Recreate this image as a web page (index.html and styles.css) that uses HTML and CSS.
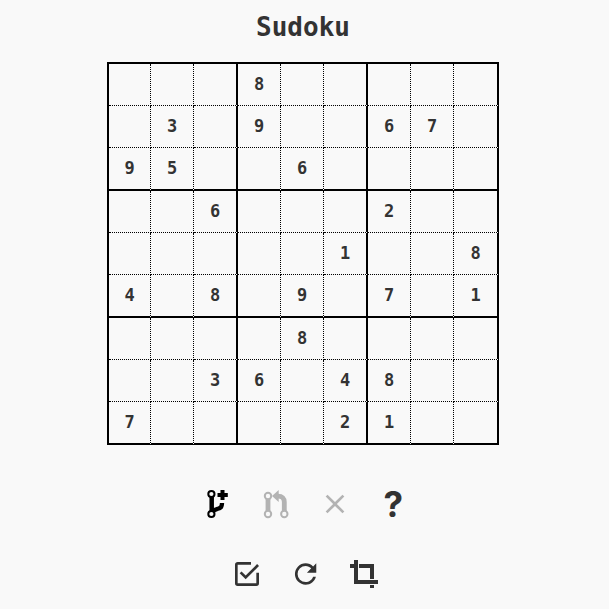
FILE: index.html
```html
<!DOCTYPE html>
<html lang="en">
<head>
<meta charset="utf-8">
<title>Sudoku</title>
<link rel="stylesheet" href="styles.css">
</head>
<body>
<h1 class="title">Sudoku</h1>
<main class="board" id="board"></main>
<div class="toolbar">
  <button class="tool" aria-label="Branch"><svg viewBox="0 0 32 32"><g fill="none" stroke="#000"><path d="M9.700 8v16" stroke-width="4.500"/><path d="M9.700 24Q12.500 21.500 15.500 20.800Q20 20.500 20 15" stroke-width="4.300"/><path d="M20.500 2v10M15.500 7h10.300" stroke-width="4"/><g fill="#f9f9f9" stroke-width="2"><circle cx="9.400" cy="6" r="3.100"/><circle cx="9.400" cy="26" r="3.100"/></g></g></svg></button>
  <button class="tool off" aria-label="Merge"><svg viewBox="0 0 32 32"><g fill="none" stroke="#b3b3b3"><path d="M8 10v14M24.300 24V14Q24.300 8.200 18 8.200H16" stroke-width="4.800"/><path d="M12 8L18.700 2v12z" fill="#b3b3b3" stroke="none"/><g fill="#f9f9f9" stroke-width="2"><circle cx="8" cy="8" r="3.200"/><circle cx="8" cy="26" r="3.200"/><circle cx="24.300" cy="26" r="3.200"/></g></g></svg></button>
  <button class="tool off" aria-label="Discard"><svg viewBox="0 0 24 24"><path d="M19 6.410L17.590 5 12 10.590 6.410 5 5 6.410 10.590 12 5 17.590 6.410 19 12 13.410 17.590 19 19 17.590 13.410 12z"/></svg></button>
  <button class="tool help">?</button>
</div>
<div class="toolbar second">
  <button class="tool" aria-label="Check"><svg viewBox="0 0 24 24"><path d="M19 19H5V5H15V3H5C3.890 3 3 3.890 3 5V19A2 2 0 0 0 5 21H19A2 2 0 0 0 21 19V11H19M7.910 10.080L6.500 11.500 11 16 21 6 19.590 4.580 11 13.170z"/></svg></button>
  <button class="tool" aria-label="Restart"><svg viewBox="0 0 24 24"><path d="M17.350 6.350C15.900 4.900 13.910 4 11.700 4A8 8 0 0 0 3.700 12A8 8 0 0 0 11.700 20C15.430 20 18.540 17.450 19.430 14H17.350C16.530 16.330 14.310 18 11.700 18A6 6 0 0 1 5.700 12A6 6 0 0 1 11.700 6C13.360 6 14.840 6.690 15.920 7.780L12.700 11H19.700V4z"/></svg></button>
  <button class="tool" aria-label="Crop"><svg viewBox="0 0 32 32"><path d="M6 2h4v20H30v4H6V10H2V6H6zM11 6h15v15h-4V10H11zM22 27h4v3h-4z"/></svg></button>
</div>
<script src="board.js"></script>
</body>
</html>
```
FILE: styles.css
```css
body {
  margin: 0;
  background: #f9f9f9;
  color: #333;
  font-family: "DejaVu Sans Mono", monospace;
  display: flex;
  flex-direction: column;
  align-items: center;
}
.title {
  margin: 12px 3px 20px 0;
  font-size: 26px;
  line-height: 30px;
}
.board {
  box-sizing: border-box;
  width: 392px;
  height: 383px;
  margin-right: 3px;
  border: solid #000;
  border-width: 2px 0 0 2px;
  display: grid;
  grid-template-columns: 42px 43px 44px 43px 43px 44px 43px 43px 45px;
  grid-template-rows: 42px 42px 43px 42px 42px 43px 42px 42px 43px;
}
.cell {
  display: flex;
  align-items: center;
  justify-content: center;
  border: 0 dotted #000;
  border-width: 0 1px 1px 0;
  padding-bottom: 2px;
  font-size: 17px;
  font-weight: bold;
  line-height: 20px;
}
.cell:nth-child(3n) {
  border-right: 2px solid #000;
}
.cell:nth-child(n+19):nth-child(-n+27),
.cell:nth-child(n+46):nth-child(-n+54),
.cell:nth-child(n+73) {
  border-bottom-width: 2px;
  border-bottom-style: solid;
}
.toolbar {
  display: flex;
  gap: 26.500px;
  margin: 43px 0 0 2px;
}
.toolbar.second {
  margin: 38px 0 0 2px;
}
.tool {
  width: 32px;
  height: 32px;
  padding: 0;
  border: 0;
  background: none;
  color: #333;
}
.tool svg {
  display: block;
  width: 32px;
  height: 32px;
  fill: #333;
}
.tool.off svg {
  fill: #b3b3b3;
}
.help {
  font: bold 35px/32px Inter, sans-serif;
}
```
FILE: board.js
```js
const rows = [
  "...8.....",
  ".3.9..67.",
  "95..6....",
  "..6...2..",
  ".....1..8",
  "4.8.9.7.1",
  "....8....",
  "..36.48..",
  "7....21.."
];
const board = document.getElementById("board");
for (const value of rows.join("")) {
  const cell = document.createElement("div");
  cell.className = "cell";
  cell.textContent = value === "." ? "" : value;
  board.appendChild(cell);
}
```
